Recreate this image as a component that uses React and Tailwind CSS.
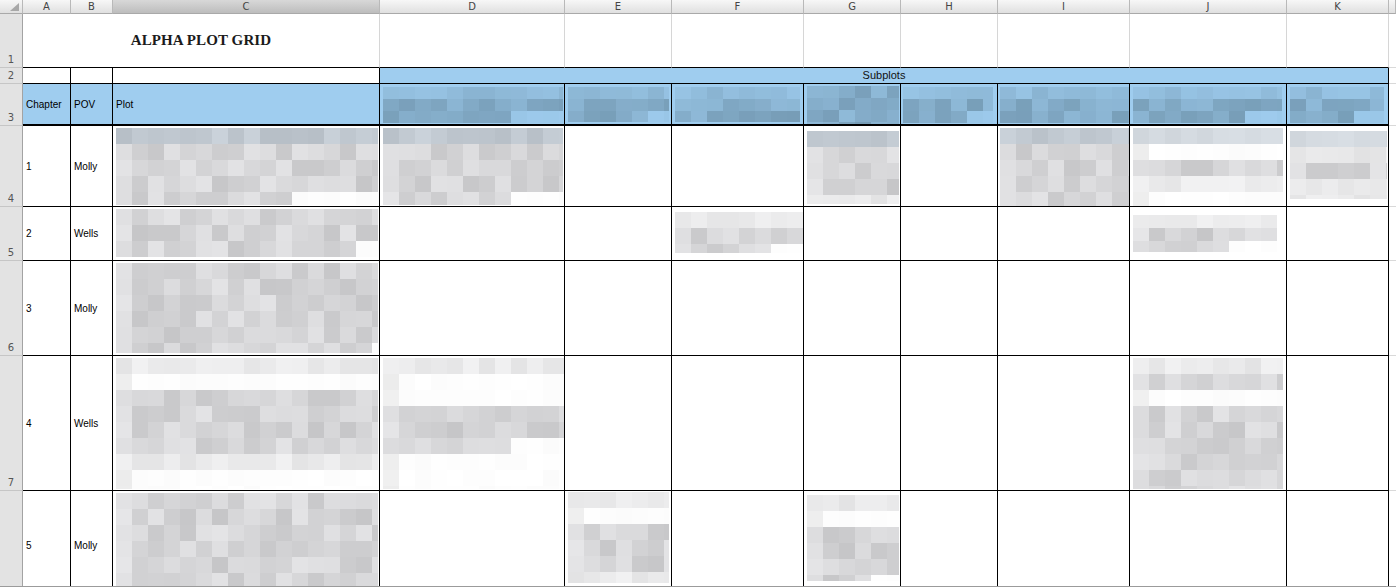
import React from 'react';

const COLS = ['A', 'B', 'C', 'D', 'E', 'F', 'G', 'H', 'I', 'J', 'K'];
const SUBPLOT_COLS = ['D', 'E', 'F', 'G', 'H', 'I', 'J', 'K'];

const CHAPTERS = [
  { n: 1, row: 4, pov: 'Molly' },
  { n: 2, row: 5, pov: 'Wells' },
  { n: 3, row: 6, pov: 'Molly' },
  { n: 4, row: 7, pov: 'Wells' },
  { n: 5, row: 8, pov: 'Molly' },
];

// pixelated (redacted) cell contents, keyed by cell address
// rows: one letter per band of blocks -> b band, B light band, g gray, l light, w white, h half gray / half white
const BLURS = {
  D3: { w: 180, h: 36, bh: 12, rows: 'ldh', tone: 'blue', pad: 'pl-[3px] pt-[3px]' },
  E3: { w: 101, h: 35, bh: 12, rows: 'ldh', tone: 'blue', pad: 'pl-[3px] pt-[3px]' },
  F3: { w: 125, h: 35, bh: 12, rows: 'ldd', tone: 'blue', pad: 'pl-[3px] pt-[3px]' },
  G3: { w: 92, h: 38, bh: 12, rows: 'ddd', tone: 'blue', pad: 'pl-[3px] pt-[2px]' },
  H3: { w: 90, h: 36, bh: 12, rows: 'ldh', tone: 'blue', pad: 'pl-[2px] pt-[3px]' },
  I3: { w: 129, h: 36, bh: 12, rows: 'ldd', tone: 'blue', pad: 'pl-[2px] pt-[3px]' },
  J3: { w: 149, h: 36, bh: 12, rows: 'ldh', tone: 'blue', pad: 'pl-[3px] pt-[3px]' },
  K3: { w: 94, h: 36, bh: 12, rows: 'ldh', tone: 'blue', pad: 'pl-[3px] pt-[3px]' },

  C4: { w: 262, h: 77, rows: 'bgggh', pad: 'pl-[3px] pt-[2px]' },
  D4: { w: 180, h: 77, rows: 'bgggh', pad: 'pl-[3px] pt-[2px]' },
  G4: { w: 92, h: 73, rows: 'bgggl', pad: 'pl-[3px] pt-[5px]' },
  I4: { w: 130, h: 78, rows: 'bgggg', pad: 'pl-[2px] pt-[2px]' },
  J4: { w: 150, h: 78, rows: 'Bwglw', pad: 'pl-[3px] pt-[2px]' },
  K4: { w: 97, h: 68, rows: 'Blgl', pad: 'pl-[3px] pt-[5px]' },

  C5: { w: 262, h: 48, rows: 'ggh', cut: 0.85, pad: 'pl-[3px] pt-[2px]' },
  F5: { w: 130, h: 41, rows: 'lgh', pad: 'pl-[3px] pt-[5px]' },
  J5: { w: 144, h: 37, bh: 13, rows: 'lgh', pad: 'pl-[3px] pt-[8px]' },

  C6: { w: 262, h: 90, rows: 'gggggh', cut: 0.9, pad: 'pl-[3px] pt-[2px]' },

  C7: { w: 262, h: 131, rows: 'lwgggglw', pad: 'pl-[3px] pt-[2px]' },
  D7: { w: 182, h: 131, rows: 'lwwgghww', pad: 'pl-[3px] pt-[2px]' },
  J7: { w: 150, h: 131, rows: 'lgwggggg', pad: 'pl-[3px] pt-[2px]' },

  C8: { w: 262, h: 96, rows: 'gggggg', pad: 'pl-[3px] pt-[2px]' },
  E8: { w: 101, h: 91, rows: 'lwgggl', pad: 'pl-[3px] pt-[1px]' },
  G8: { w: 92, h: 86, rows: 'lwgggh', pad: 'pl-[3px] pt-[4px]' },
};

function mulberry(seed) {
  let a = seed >>> 0;
  return () => {
    a = (a + 0x6d2b79f5) >>> 0;
    let t = a;
    t = Math.imul(t ^ (t >>> 15), t | 1);
    t ^= t + Math.imul(t ^ (t >>> 7), t | 61);
    return ((t ^ (t >>> 14)) >>> 0) / 4294967296;
  };
}

function hash(str) {
  let h = 2166136261;
  for (let i = 0; i < str.length; i++) h = Math.imul(h ^ str.charCodeAt(i), 16777619);
  return h >>> 0;
}

const rgb = (r, g, b) => `rgb(${Math.round(r)},${Math.round(g)},${Math.round(b)})`;

function shade(kind, tone, r, first) {
  if (tone === 'blue') {
    let d;
    if (kind === 'd') d = 16 + r * 24;
    else if (kind === 'l') d = 6 + r * 16;
    else d = first ? 14 : r * 6; // 'n' -> cell blue
    return rgb(159 - d, 205 - d * 1.2, 239 - d * 1.4);
  }
  let v;
  switch (kind) {
    case 'b':
      v = 190 + r * 20;
      return rgb(v - 8, v, v + 8);
    case 'B':
      v = 212 + r * 8;
      return rgb(v - 4, v + 2, v + 8);
    case 'l':
      v = 226 + r * 16;
      return rgb(v, v, v + 1);
    case 'w':
      v = first ? 236 + r * 4 : 251 + r * 4;
      return rgb(v, v, v);
    default:
      v = first ? 220 + r * 10 : 198 + r * 30;
      return rgb(v, v, v + 2);
  }
}

function Blur({ id, w, h, rows, tone = 'gray', bh = 16, bw = 16, cut = 0.62 }) {
  const rand = mulberry(hash(id));
  const nRows = Math.ceil(h / bh);
  const nCols = Math.ceil(w / bw);
  const rects = [];
  for (let i = 0; i < nRows; i++) {
    const kind = rows[i] ?? rows[rows.length - 1];
    for (let j = 0; j < nCols; j++) {
      let k = kind;
      if (k === 'h') k = j / nCols < cut ? (tone === 'blue' ? 'd' : 'g') : tone === 'blue' ? 'n' : 'w';
      rects.push(
        <rect key={`${i}-${j}`} x={j * bw} y={i * bh} width={bw} height={bh} fill={shade(k, tone, rand(), j === 0)} />
      );
    }
  }
  return (
    <svg width={w} height={h} className="block shrink-0" shapeRendering="crispEdges">
      {rects}
    </svg>
  );
}

const sans = "font-['Liberation_Sans',Arial,sans-serif]";

function ColHead({ label, selected }) {
  return (
    <div
      className={`flex items-center justify-center border-r border-b border-r-[#b9b9b9] border-b-[#a9a9a9] bg-linear-to-b text-[10px] text-[#444] font-['DejaVu_Sans',sans-serif] ${
        selected ? 'from-[#d8d8d8] to-[#bdbdbd]' : 'from-[#f7f7f7] to-[#e0e0e0]'
      }`}
    >
      {label}
    </div>
  );
}

function RowHead({ n }) {
  return (
    <div className="flex items-end justify-center border-r border-b border-r-[#a3a3a3] border-b-[#c6c6c6] bg-[#e3e3e3] pb-[1px] text-[10px] leading-[12px] text-[#555] font-['DejaVu_Sans',sans-serif]">
      {n}
    </div>
  );
}

function Cell({ addr, blue, thick, children }) {
  const blur = BLURS[addr];
  return (
    <div
      className={`flex overflow-hidden border-r border-black ${thick ? 'border-b-2' : 'border-b'} ${
        blue ? 'bg-[#9fcdef]' : 'bg-white'
      } ${blur ? `items-start ${blur.pad}` : 'items-center pl-[3px]'}`}
    >
      {blur ? <Blur id={addr} {...blur} /> : <span className={`${sans} text-[10px] text-black`}>{children}</span>}
    </div>
  );
}

function Spare() {
  return <div className="border-b border-[#d9d9d9] bg-white" />;
}

export default function App() {
  return (
    <div className="h-[587px] w-[1396px] overflow-hidden border-b border-[#9b9b9b] bg-white">
      <div className="grid grid-cols-[23px_48px_42px_267px_185px_107px_132px_97px_97px_132px_157px_102px_1fr] grid-rows-[14px_54px_16px_42px_81px_54px_95px_135px_110px]">
        {/* column letters */}
        <div className="relative border-r border-b border-r-[#b9b9b9] border-b-[#a9a9a9] bg-linear-to-b from-[#f7f7f7] to-[#e0e0e0]">
          <svg width="9" height="8" className="absolute right-[3px] bottom-[2px]">
            <polygon points="9,0 9,8 0,8" fill="#a8a8a8" />
          </svg>
        </div>
        {COLS.map(c => (
          <ColHead key={c} label={c} selected={c === 'C'} />
        ))}
        <ColHead label="" />

        {/* row 1: title */}
        <RowHead n={1} />
        <div className="col-span-3 flex items-center justify-center border-r border-b border-r-[#d6d6d6] border-b-black bg-white">
          <span className="font-['Liberation_Serif',serif] text-[15px] font-bold text-[#1b1b1b] tracking-[0.1px]">
            ALPHA PLOT GRID
          </span>
        </div>
        {SUBPLOT_COLS.map(c => (
          <div key={c} className="border-r border-b border-r-[#d6d6d6] border-b-black bg-white" />
        ))}
        <Spare />

        {/* row 2 */}
        <RowHead n={2} />
        <Cell addr="A2" />
        <Cell addr="B2" />
        <Cell addr="C2" />
        <div className={`col-span-8 flex items-center justify-center border-r border-b border-black bg-[#9fcdef] ${sans} text-[11px] text-[#111]`}>
          Subplots
        </div>
        <Spare />

        {/* row 3: headings */}
        <RowHead n={3} />
        <Cell addr="A3" blue thick>Chapter</Cell>
        <Cell addr="B3" blue thick>POV</Cell>
        <Cell addr="C3" blue thick>Plot</Cell>
        {SUBPLOT_COLS.map(c => (
          <Cell key={c} addr={`${c}3`} blue thick />
        ))}
        <Spare />

        {/* chapters; the last row runs past the window, so its number is out of view */}
        {CHAPTERS.map(ch => (
          <React.Fragment key={ch.n}>
            <RowHead n={ch.row < 8 ? ch.row : ''} />
            <Cell addr={`A${ch.row}`}>{ch.n}</Cell>
            <Cell addr={`B${ch.row}`}>{ch.pov}</Cell>
            <Cell addr={`C${ch.row}`} />
            {SUBPLOT_COLS.map(c => (
              <Cell key={c} addr={`${c}${ch.row}`} />
            ))}
            <Spare />
          </React.Fragment>
        ))}
      </div>
    </div>
  );
}
